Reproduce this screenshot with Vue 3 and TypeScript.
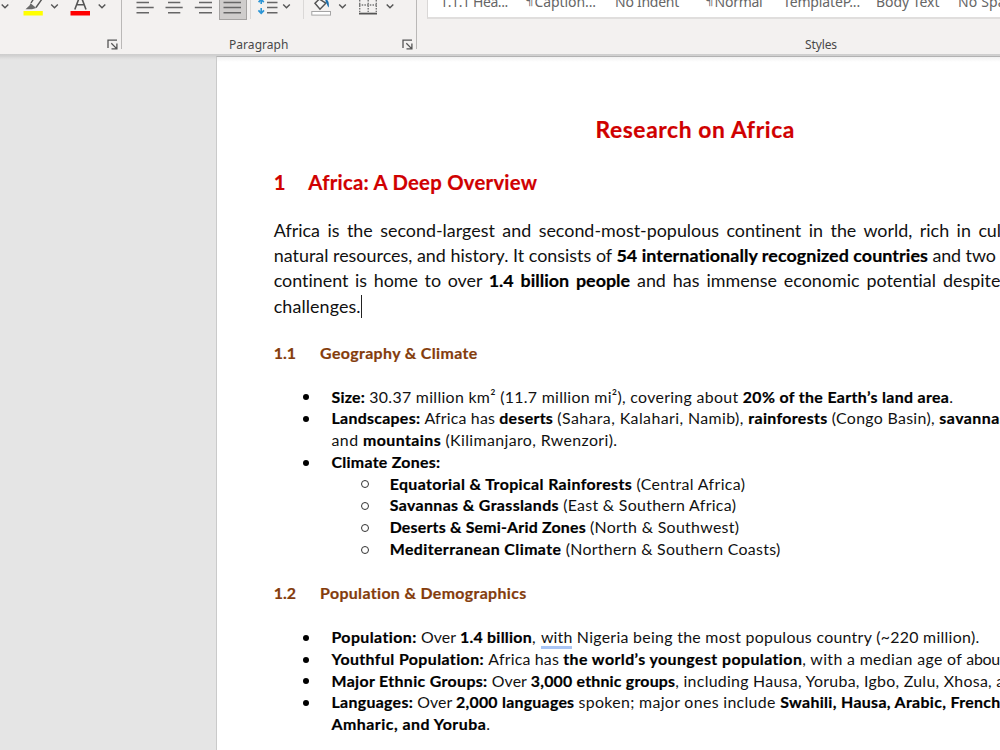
<script setup lang="ts">
interface Run { t: string; w?: number; b?: boolean; mark?: boolean; word?: boolean }
interface Line { runs: Run[]; kind: 'dot' | 'ring' | 'cont' }

const r = (t: string, w: number): Run => ({ t, w })
const b = (t: string, w: number): Run => ({ t, w, b: true })

// Distributes spare width over the letters (or the word gaps) of a run.
const vFit = {
  mounted(el: HTMLElement, binding: { value: Run }) {
    const { t, w, word } = binding.value
    if (!w) return
    const spare = w - el.getBoundingClientRect().width
    if (word) el.style.wordSpacing = `${spare / (t.split(' ').length - 1)}px`
    else el.style.letterSpacing = `${spare / t.length}px`
  },
}

const title = b('Research on Africa', 199.5)
const chapter = b('Africa: A Deep Overview', 229)

const intro: Run[][] = [
  [{ t: 'Africa is the second-largest and second-most-populous continent in the world, rich in ', w: 704.7, word: true }, r('cultures,', 66)],
  [r('natural resources, and history. It consists of ', 342.7), b('54 internationally recognized countries ', 316), r('and two ', 68)],
  [{ t: 'continent is home to over ', w: 215, word: true }, { t: '1.4 billion people ', w: 148.3, b: true, word: true }, { t: 'and has immense economic potential ', w: 306, word: true }, r('despite', 57.5)],
]

const geography: Line[] = [
  { kind: 'dot', runs: [b('Size: ', 37.8), r('30.37 million km² (11.7 million mi²), covering about ', 373.5), b('20% of the Earth’s land area', 206.5), r('.', 4)] },
  { kind: 'dot', runs: [b('Landscapes: ', 93), r('Africa has ', 74.8), b('deserts ', 58), r('(Sahara, Kalahari, Namib), ', 191), b('rainforests ', 83.5), r('(Congo Basin), ', 107.5), b('savannas', 68)] },
  { kind: 'cont', runs: [r('and ', 31.5), b('mountains ', 82.5), r('(Kilimanjaro, Rwenzori).', 172)] },
  { kind: 'dot', runs: [b('Climate Zones:', 109)] },
  { kind: 'ring', runs: [b('Equatorial & Tropical Rainforests ', 246.7), r('(Central Africa)', 109)] },
  { kind: 'ring', runs: [b('Savannas & Grasslands ', 173.5), r('(East & Southern Africa)', 173)] },
  { kind: 'ring', runs: [b('Deserts & Semi-Arid Zones ', 200.2), r('(North & Southwest)', 149.5)] },
  { kind: 'ring', runs: [b('Mediterranean Climate ', 176), r('(Northern & Southern Coasts)', 214.8)] },
]

const population: Line[] = [
  { kind: 'dot', runs: [b('Population: ', 89.5), r('Over ', 39), b('1.4 billion', 72), r(', ', 9), { t: 'with', w: 31.5, mark: true }, r(' Nigeria being the most populous country (~220 million).', 407)] },
  { kind: 'dot', runs: [b('Youthful Population: ', 156.8), r('Africa has ', 75), b('the world’s youngest population', 239), r(', with a median age of ', 164), r('about', 39)] },
  { kind: 'dot', runs: [b('Major Ethnic Groups: ', 160.3), r('Over ', 39), b('3,000 ethnic groups', 144.5), r(', including Hausa, Yoruba, Igbo, Zulu, Xhosa, ', 321), r('and', 27)] },
  { kind: 'dot', runs: [b('Languages: ', 85.8), r('Over ', 38.7), b('2,000 languages ', 122.5), r('spoken; major ones include ', 201.7), b('Swahili, Hausa, Arabic, French', 220.5)] },
  { kind: 'cont', runs: [b('Amharic, and Yoruba', 154.8), r('.', 4)] },
]

const sections = [
  { no: '1.1', name: b('Geography & Climate', 157.5), lines: geography },
  { no: '1.2', name: b('Population & Demographics', 206.5), lines: population },
]

const styleNames = [
  { cell: 85, pilcrow: false, run: r('1.1.1 Hea...', 68) },
  { cell: 90, pilcrow: true, run: r('Caption...', 61.5) },
  { cell: 90, pilcrow: false, run: r('No Indent', 64) },
  { cell: 78, pilcrow: true, run: r('Normal', 48) },
  { cell: 93, pilcrow: false, run: r('TemplateP...', 77) },
  { cell: 82, pilcrow: false, run: r('Body Text', 63.5) },
  { cell: 90, pilcrow: false, run: r('No Spacing', 76) },
]
</script>

<template>
  <div class="window">
    <header class="ribbon">
      <section class="group font-group">
        <div class="tools">
          <svg width="16" height="22" viewBox="0 0 16 22"><path class="chev" d="M1.7 4.5 5 7.8 8.3 4.5" /></svg>
          <svg width="46" height="22" viewBox="16 0 46 22">
            <rect x="23.5" y="11" width="19.3" height="4.5" fill="#ff0" />
            <path d="M30.5 3.2 36.3 8 32 9.3 25.5 9.2 29.5 5.4Z" fill="#6a6a6a" />
            <path d="M31 3 33.5-1M36 7.5 42-1" stroke="#555" stroke-width="1.4" fill="none" />
            <path class="chev" d="M51.2 4.5 54.5 7.8 57.8 4.5" />
          </svg>
          <svg width="58" height="22" viewBox="62 0 58 22">
            <rect x="70.5" y="11" width="19.5" height="4.5" fill="red" />
            <path d="M74.8 9.5 79.5-3M86 9.5 81.3-3M76.3 4.8H84.5" stroke="#555" stroke-width="1.6" fill="none" />
            <path class="chev" d="M98.7 4.5 102 7.8 105.3 4.5" />
          </svg>
        </div>
        <div class="caption">
          <svg class="launcher" width="12" height="12" viewBox="0 0 12 12"><path d="M1 9V1.2H10M4.3 4.3 9.4 9.4M9.9 4.5V9.9H4.5" /></svg>
        </div>
      </section>

      <section class="group para-group">
        <div class="tools">
          <svg width="97" height="22" viewBox="122 0 97 22">
            <path class="rule" d="M136.5 2.5H149M136.5 7.5H153.7M136.5 12.7H149M168 2.5H180.3M165.5 7.5H182.7M168 12.7H180.3M199 2.5H212M194.8 7.5H212M199 12.7H212" />
          </svg>
          <span class="pressed">
            <svg width="26" height="20" viewBox="220 0 26 20"><path class="rule" d="M223.5 2.5H241M223.5 7.5H241M223.5 12.7H241" /></svg>
          </span>
          <svg width="56" height="22" viewBox="247 0 56 22">
            <path d="M250.5 0V19" stroke="#dad8d7" />
            <path d="M261.2 0V4M261.2 8V13" stroke="#2b95d6" stroke-width="1.6" />
            <path d="M258.6 2.2 261.2-.6 263.8 2.2M258.4 10.3 261.2 13.2 264 10.3" stroke="#2b95d6" stroke-width="1.7" fill="none" />
            <path class="rule" d="M267 2.5H277.5M267 7.5H277.5M267 12.7H277.5" />
            <path class="chev" d="M283.2 4.5 286.5 7.8 289.8 4.5" />
          </svg>
          <svg width="113" height="22" viewBox="303 0 113 22">
            <path d="M303.5 0V19" stroke="#dad8d7" />
            <rect x="311.8" y="11.5" width="18.7" height="3.6" fill="#fff" stroke="#a5a5a5" />
            <path d="M315 3.3 319.3-1 325.8 3.2 320 9.2Z" fill="#f7f7f7" stroke="#555" stroke-width="1.5" />
            <path d="M325-1C328.5-.5 329.3 3 328.7 7.5 327.5 6.3 327 4 325.8 2Z" fill="#1a6fae" />
            <path class="chev" d="M339.2 4.5 342.5 7.8 345.8 4.5" />
            <path d="M359.7 0V12M368.2 0V12M376.3 0V12M359 5H377" stroke="#777" stroke-width="1.4" stroke-dasharray="1.5 1.2" />
            <path d="M359 13.6H377" stroke="#555" stroke-width="1.8" />
            <path class="chev" d="M386.7 4.5 390 7.8 393.3 4.5" />
          </svg>
        </div>
        <div class="caption">
          <span v-fit="r('Paragraph', 59.5)" class="run">Paragraph</span>
          <svg class="launcher" width="12" height="12" viewBox="0 0 12 12"><path d="M1 9V1.2H10M4.3 4.3 9.4 9.4M9.9 4.5V9.9H4.5" /></svg>
        </div>
      </section>

      <section class="group styles-group">
        <div class="gallery">
          <div v-for="s in styleNames" :key="s.run.t" class="style-cell" :style="{ width: s.cell + 'px' }">
            <span v-if="s.pilcrow" class="pilcrow">¶</span>
            <span v-fit="s.run" class="run">{{ s.run.t }}</span>
          </div>
        </div>
        <div class="caption"><span v-fit="r('Styles', 32)" class="run">Styles</span></div>
      </section>
    </header>

    <main class="desk">
      <article class="page">
        <h1 class="title"><span v-fit="title" class="run">{{ title.t }}</span></h1>
        <h2 class="chapter"><span class="no">1</span><span v-fit="chapter" class="run">{{ chapter.t }}</span></h2>
        <div class="intro">
          <div v-for="(line, i) in intro" :key="i" class="row">
            <span v-for="x in line" :key="x.t" v-fit="x" class="run" :class="{ bold: x.b }">{{ x.t }}</span>
          </div>
          <div class="row"><span v-fit="r('challenges.', 87)" class="run">challenges.</span><i class="caret"></i></div>
        </div>
        <section v-for="s in sections" :key="s.no" class="section">
          <h3 class="sub"><span class="no">{{ s.no }}</span><span v-fit="s.name" class="run">{{ s.name.t }}</span></h3>
          <div v-for="(line, i) in s.lines" :key="i" class="row item" :class="line.kind">
            <span class="marker"><i></i></span>
            <span v-for="x in line.runs" :key="x.t" v-fit="x" class="run" :class="{ bold: x.b, mark: x.mark }">{{ x.t }}</span>
          </div>
        </section>
      </article>
    </main>
  </div>
</template>

<style>
body { margin: 0; overflow: hidden; }
</style>

<style scoped>
.window { width: 1000px; height: 750px; overflow: hidden; display: flex; flex-direction: column; background: #e5e5e5; font-family: Lato, "Liberation Sans", sans-serif; font-variant-ligatures: none; color: #111; }
.run { white-space: pre; flex: none; }
.ribbon { height: 54px; flex: none; display: flex; background: #f3f1f0; font-family: "Noto Sans", "Open Sans", sans-serif; }
.group { display: flex; flex-direction: column; height: 49px; box-sizing: border-box; flex: none; }
.font-group { width: 122px; border-right: 1px solid #bab8b7; }
.para-group { width: 295px; border-right: 1px solid #bab8b7; }
.tools { display: flex; height: 37px; flex: none; align-items: flex-start; }
.tools svg { flex: none; display: block; }
.chev { fill: none; stroke: #555; stroke-width: 1.4; }
.rule { fill: none; stroke: #666; stroke-width: 1.4; }
.pressed { width: 26px; height: 19px; background: #cfcdcc; border: 1px solid #a5a3a2; border-top: 0; overflow: hidden; flex: none; }
.caption { display: flex; justify-content: flex-end; height: 16px; flex: none; line-height: 16px; font-size: 12px; color: #484848; }
.launcher { margin: 2px 2.5px 0 0; fill: none; stroke: #555; stroke-width: 1.3; }
.para-group .caption { justify-content: space-between; padding-left: 107px; }
.styles-group { width: 583px; }
.gallery { margin-left: 10px; height: 17px; display: flex; padding-left: 12px; box-sizing: content-box; background: #fff; border-left: 1px solid #d9d7d6; border-bottom: 2px solid #e0dedd; overflow: hidden; flex: none; }
.style-cell { display: flex; flex: none; font-size: 14px; line-height: 20px; margin-top: -8px; color: #666; }
.pilcrow { width: 9.5px; margin-top: -2px; font-size: 13px; flex: none; }
.styles-group .caption { justify-content: flex-start; padding-left: 388px; margin-top: 18px; }
.desk { flex: 1; display: flex; padding: 2px 0 0 216px; background: linear-gradient(#cdcdcd 0, #d2d2d2 2px, #dedede 4px, #e5e5e5 6px); }
.page { flex: none; width: 900px; box-sizing: border-box; padding-left: 56.7px; border-left: 1px solid #cacaca; border-top: 1px solid #b2b2b2; background: linear-gradient(#f1f1f1, #fff 5px); }
h1, h2, h3 { margin: 0; font-weight: 700; -webkit-text-stroke: 0.2px currentColor; }
.title { width: 843px; height: 30px; line-height: 30px; margin-top: 57px; font-size: 22.8px; color: #d00000; display: flex; justify-content: center; }
.chapter { display: flex; height: 28px; line-height: 28px; margin-top: 23.6px; font-size: 20.3px; color: #d00000; }
.chapter .no { width: 34.6px; }
.intro { margin-top: 22.1px; font-size: 17.9px; line-height: 25.3px; }
.row { display: flex; }
.bold { font-weight: 700; color: #000; -webkit-text-stroke: 0.2px currentColor; }
.caret { width: 1px; height: 23px; margin-top: 1px; background: #222; }
.section { font-size: 15.9px; line-height: 21.7px; }
.sub { display: flex; height: 22px; line-height: 22px; margin: 22.9px 0 22px; font-size: 15.9px; color: #843c0c; }
.sub .no { width: 46.4px; }
.marker { width: 57.8px; height: 21.7px; flex: none; display: flex; align-items: center; box-sizing: border-box; padding: 1.6px 0 0 29.8px; }
.marker i { width: 6px; height: 6px; border-radius: 50%; background: #000; }
.cont .marker i { display: none; }
.ring .marker { width: 116px; padding: 2px 0 0 87.6px; }
.ring .marker i { box-sizing: border-box; width: 8px; height: 8px; border: 1px solid #333; background: none; }
.mark { box-shadow: 0 1px #a9c5f5, inset 0 -2px #a9c5f5; }
</style>
